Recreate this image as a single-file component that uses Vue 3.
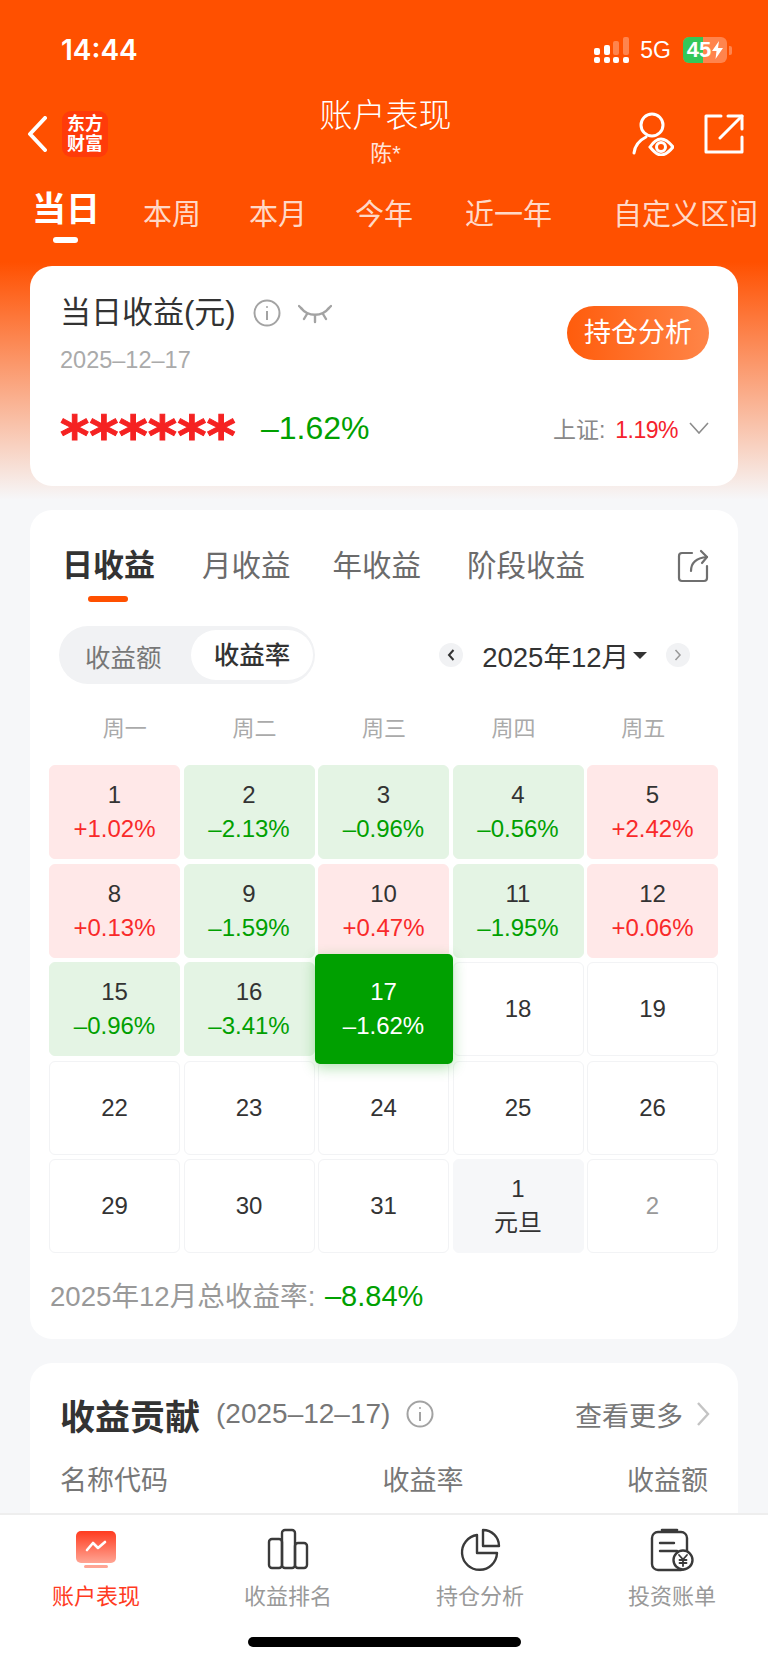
<template>
  <div class="page">
    <div class="status">
      <span class="time">14:44</span>
      <div class="status-right">
        <svg class="signal" width="36" height="28" viewBox="0 0 36 28">
          <rect x="0" y="12" width="6" height="7" rx="2" fill="#fff" />
          <rect x="10" y="9" width="6" height="10" rx="2" fill="#fff" />
          <rect x="19" y="5" width="6" height="14" rx="2" fill="#fff" opacity="0.3" />
          <rect x="29" y="1" width="6" height="18" rx="2" fill="#fff" opacity="0.3" />
          <rect x="0" y="21" width="6" height="6" rx="2" fill="#fff" />
          <rect x="10" y="21" width="6" height="6" rx="2" fill="#fff" />
          <rect x="19" y="21" width="6" height="6" rx="2" fill="#fff" />
          <rect x="29" y="21" width="6" height="6" rx="2" fill="#fff" />
        </svg>
        <span class="net">5G</span>
        <div class="battery">
          <span class="level"></span>
          <span class="num">45</span>
          <svg width="11" height="18" viewBox="0 0 11 18" class="bolt">
            <path d="M7 0 L0 10 H4.5 L3.5 18 L11 7 H6 Z" fill="#fff" />
          </svg>
        </div>
        <span class="nub"></span>
      </div>
    </div>

    <div class="nav">
      <div class="nav-left">
        <svg width="20" height="36" viewBox="0 0 20 36">
          <path d="M18 2 L3 18 L18 34" fill="none" stroke="#fff" stroke-width="4" stroke-linecap="round" stroke-linejoin="round" />
        </svg>
        <div class="logo">东方<br />财富</div>
      </div>
      <div class="nav-title">
        <div class="title">账户表现</div>
        <div class="sub">陈*</div>
      </div>
      <div class="nav-right">
        <svg width="42" height="44" viewBox="0 0 42 44" fill="none" stroke="#fff" stroke-width="3" stroke-linecap="round">
          <circle cx="20" cy="13" r="11" />
          <path d="M2 41 C3 32 8 28 14 25" />
          <path d="M18 35 C22 29 26 27 29 27 C33 27 37 30 41 35 C37 40 33 43 29 43 C25 43 22 40 18 35 Z" />
          <circle cx="29" cy="35" r="4.5" />
        </svg>
        <svg width="40" height="40" viewBox="0 0 40 40" fill="none" stroke="#fff" stroke-width="3" stroke-linecap="round" stroke-linejoin="round">
          <path d="M17 2 H2 V38 H38 V23" />
          <path d="M16 24 L38 2" />
          <path d="M24 2 H38 V15" />
        </svg>
      </div>
    </div>

    <div class="ranges">
      <span v-for="(r, i) in ranges" :key="r" class="range" :class="{ on: i === 0 }">{{ r }}</span>
    </div>

    <section class="card summary">
      <div class="sum-top">
        <div>
          <div class="sum-title">
            <span>当日收益(元)</span>
            <svg class="info" width="28" height="28" viewBox="0 0 28 28" fill="none" stroke="#a3a3a3" stroke-width="2">
              <circle cx="14" cy="14" r="12.5" />
              <path d="M14 12 V21" />
              <circle cx="14" cy="8" r="1" fill="#a3a3a3" stroke="none" />
            </svg>
            <svg class="eye" width="34" height="20" viewBox="0 0 34 20" fill="none" stroke="#a3a3a3" stroke-width="2.4" stroke-linecap="round">
              <path d="M3 4 C10 13 24 13 31 4" />
              <path d="M1 2 L4 5 M33 2 L30 5 M9 10 L6 15 M25 10 L28 15 M17 12 V18" />
            </svg>
          </div>
          <div class="sum-date">2025–12–17</div>
        </div>
        <div class="pill">持仓分析</div>
      </div>
      <div class="sum-bottom">
        <span class="stars">******</span>
        <span class="sum-rate">–1.62%</span>
        <span class="index">上证:<em>1.19%</em></span>
        <svg width="20" height="12" viewBox="0 0 20 12" fill="none" stroke="#8c8c8c" stroke-width="1.6">
          <path d="M1 1 L10 11 L19 1" />
        </svg>
      </div>
    </section>

    <section class="card calendar">
      <div class="cal-tabs">
        <span v-for="(t, i) in calTabs" :key="t" class="cal-tab" :class="{ on: i === 0 }">{{ t }}</span>
        <svg class="share" width="32" height="34" viewBox="0 0 32 34" fill="none" stroke="#6f6f6f" stroke-width="2.2" stroke-linecap="round" stroke-linejoin="round">
          <path d="M15 4 H5 Q2 4 2 7 V29 Q2 32 5 32 H27 Q30 32 30 29 V17" />
          <path d="M14 22 C14 14 19 9 30 8" />
          <path d="M24 2 L30 8 L25 14" />
        </svg>
      </div>

      <div class="cal-tools">
        <div class="segment">
          <span class="seg">收益额</span>
          <span class="seg active">收益率</span>
        </div>
        <div class="month">
          <span class="arrow">
            <svg width="8" height="12" viewBox="0 0 8 12" fill="none" stroke="#333" stroke-width="2"><path d="M6.5 1 L2 6 L6.5 11" /></svg>
          </span>
          <span class="month-text">2025年12月</span>
          <span class="caret"></span>
          <span class="arrow next">
            <svg width="8" height="12" viewBox="0 0 8 12" fill="none" stroke="#999" stroke-width="1.5"><path d="M1.5 1 L6 6 L1.5 11" /></svg>
          </span>
        </div>
      </div>

      <div class="week">
        <span v-for="w in weekdays" :key="w">{{ w }}</span>
      </div>

      <div class="grid">
        <div v-for="c in cells" :key="c.key" class="cell" :class="c.type">
          <span class="day">{{ c.day }}</span>
          <span v-if="c.rate" class="rate">{{ c.rate }}</span>
          <span v-if="c.note" class="note">{{ c.note }}</span>
        </div>
      </div>

      <div class="total">2025年12月总收益率: <b>–8.84%</b></div>
    </section>

    <section class="card contrib">
      <div class="con-head">
        <span class="con-title">收益贡献</span>
        <span class="con-date">(2025–12–17)</span>
        <svg width="28" height="28" viewBox="0 0 28 28" fill="none" stroke="#a3a3a3" stroke-width="2">
          <circle cx="14" cy="14" r="12.5" />
          <path d="M14 12 V21" />
          <circle cx="14" cy="8" r="1" fill="#a3a3a3" stroke="none" />
        </svg>
        <span class="more">查看更多</span>
        <svg class="more-arrow" width="14" height="26" viewBox="0 0 14 26" fill="none" stroke="#c4c4c4" stroke-width="2.4">
          <path d="M2 2 L12 13 L2 24" />
        </svg>
      </div>
      <div class="con-cols">
        <span>名称代码</span>
        <span>收益率</span>
        <span>收益额</span>
      </div>
    </section>

    <nav class="tabbar">
      <div class="tab on">
        <svg width="44" height="44" viewBox="0 0 44 44">
          <defs>
            <linearGradient id="act" x1="0" y1="0" x2="0" y2="1">
              <stop offset="0" stop-color="#ff3b1f" />
              <stop offset="1" stop-color="#ffa594" />
            </linearGradient>
          </defs>
          <rect x="2" y="3" width="40" height="32" rx="5" fill="url(#act)" />
          <rect x="10" y="37" width="24" height="3" rx="1.5" fill="#ffa594" />
          <path d="M13 22 L19 15 L24 20 L31 14" fill="none" stroke="#fff" stroke-width="2.6" stroke-linecap="round" stroke-linejoin="round" />
        </svg>
        <span>账户表现</span>
      </div>
      <div class="tab">
        <svg width="44" height="44" viewBox="0 0 44 44" fill="none" stroke="#3a3a3a" stroke-width="2.4" stroke-linejoin="round">
          <rect x="3" y="11" width="13" height="29" rx="3" />
          <rect x="16" y="2" width="13" height="38" rx="3" />
          <rect x="29" y="15" width="12" height="25" rx="3" />
        </svg>
        <span>收益排名</span>
      </div>
      <div class="tab">
        <svg width="44" height="44" viewBox="0 0 44 44" fill="none" stroke="#3a3a3a" stroke-width="2.4" stroke-linejoin="round">
          <path d="M19 7 A17.5 17.5 0 1 0 39 25 H19 Z" />
          <path d="M25 2 A16 16 0 0 1 41 18 H25 Z" />
        </svg>
        <span>持仓分析</span>
      </div>
      <div class="tab">
        <svg width="44" height="44" viewBox="0 0 44 44" fill="none" stroke="#3a3a3a" stroke-width="2.4" stroke-linecap="round">
          <rect x="2" y="4" width="35" height="38" rx="6" />
          <path d="M12 2 H27" stroke-width="2.6" />
          <path d="M10 15 H24 M10 23 H27" />
          <circle cx="33" cy="32" r="9.5" fill="#fff" />
          <path d="M29 27 L33 31.5 L37 27 M33 31.5 V38 M29.5 32 H36.5 M29.5 35 H36.5" stroke-width="1.8" />
        </svg>
        <span>投资账单</span>
      </div>
      <div class="home"></div>
    </nav>
  </div>
</template>

<script setup>
const ranges = ["当日", "本周", "本月", "今年", "近一年", "自定义区间"];
const calTabs = ["日收益", "月收益", "年收益", "阶段收益"];
const weekdays = ["周一", "周二", "周三", "周四", "周五"];

const up = (day, rate) => ({ key: "d" + day, day, rate, type: "up" });
const down = (day, rate) => ({ key: "d" + day, day, rate, type: "down" });
const plain = (day) => ({ key: "d" + day, day, type: "plain" });

const cells = [
  up(1, "+1.02%"),
  down(2, "–2.13%"),
  down(3, "–0.96%"),
  down(4, "–0.56%"),
  up(5, "+2.42%"),
  up(8, "+0.13%"),
  down(9, "–1.59%"),
  up(10, "+0.47%"),
  down(11, "–1.95%"),
  up(12, "+0.06%"),
  down(15, "–0.96%"),
  down(16, "–3.41%"),
  { key: "d17", day: 17, rate: "–1.62%", type: "today" },
  plain(18),
  plain(19),
  plain(22),
  plain(23),
  plain(24),
  plain(25),
  plain(26),
  plain(29),
  plain(30),
  plain(31),
  { key: "n1", day: 1, note: "元旦", type: "holiday" },
  { key: "n2", day: 2, type: "plain muted" },
];
</script>

<style>
html,
body {
  margin: 0;
  background: #f6f7f9;
}
</style>

<style scoped>
.page {
  position: relative;
  width: 768px;
  height: 1663px;
  overflow: hidden;
  font-family: "Liberation Sans", "Noto Sans CJK SC", sans-serif;
  color: #333;
  background: linear-gradient(#ff5000 0, #ff5000 262px, #f6f7f9 500px);
}

.status {
  height: 96px;
  display: flex;
  justify-content: space-between;
  align-items: flex-start;
  padding: 0 36px 0 61px;
  box-sizing: border-box;
  color: #fff;
}

.time {
  margin-top: 32px;
  font-family: "Inter", sans-serif;
  font-size: 28px;
  line-height: 36px;
  font-weight: 600;
}

.status-right {
  display: flex;
  align-items: center;
  margin-top: 36px;
  height: 28px;
}

.signal {
  margin-right: 10px;
}

.net {
  font-size: 23px;
  margin-right: 12px;
}

.battery {
  position: relative;
  display: flex;
  align-items: center;
  justify-content: center;
  gap: 1px;
  width: 44px;
  height: 26px;
  border-radius: 6px;
  overflow: hidden;
  background: rgba(255, 255, 255, 0.3);
}

.level {
  position: absolute;
  left: 0;
  top: 0;
  bottom: 0;
  width: 20px;
  background: #34c759;
}

.num {
  position: relative;
  font-size: 22px;
  font-weight: 700;
}

.bolt {
  position: relative;
}

.nub {
  width: 3px;
  height: 9px;
  margin-left: 2px;
  border-radius: 0 2px 2px 0;
  background: rgba(255, 255, 255, 0.3);
}

.nav {
  height: 76px;
  display: flex;
  align-items: center;
  justify-content: space-between;
  padding: 0 24px 0 27px;
}

.nav-left {
  display: flex;
  align-items: center;
  gap: 15px;
  width: 200px;
}

.logo {
  width: 46px;
  height: 46px;
  box-sizing: border-box;
  padding-top: 3px;
  border-radius: 9px;
  background: #ff3b0a;
  color: #fff;
  font-size: 18px;
  line-height: 20px;
  font-weight: 700;
  text-align: center;
}

.nav-title {
  text-align: center;
  color: #fff;
}

.title {
  font-size: 33px;
  line-height: 40px;
  font-weight: 300;
  margin-top: -4px;
}

.sub {
  font-size: 22px;
  line-height: 30px;
  margin-top: 3px;
  opacity: 0.85;
}

.nav-right {
  display: flex;
  align-items: center;
  justify-content: flex-end;
  gap: 30px;
  width: 200px;
}

.ranges {
  height: 94px;
  box-sizing: border-box;
  padding: 14px 0 0 32px;
  display: flex;
  align-items: flex-start;
  white-space: nowrap;
}

.range {
  margin-left: 48px;
  padding-top: 11px;
  font-size: 29px;
  line-height: 36px;
  color: rgba(255, 255, 255, 0.8);
}

.range:nth-child(2) {
  margin-left: 43px;
}

.range:nth-child(5) {
  margin-left: 52px;
}

.range:nth-child(6) {
  margin-left: 61px;
}

.range.on {
  position: relative;
  margin-left: 0;
  padding-top: 0;
  font-size: 34px;
  line-height: 46px;
  font-weight: 700;
  color: #fff;
}

.range.on::after {
  content: "";
  position: absolute;
  left: 21px;
  top: 51px;
  width: 25px;
  height: 6px;
  border-radius: 3px;
  background: #fff;
}

.card {
  margin: 0 30px;
  background: #fff;
  border-radius: 22px;
}

.summary {
  height: 220px;
  box-sizing: border-box;
  padding: 26px 29px 0 30px;
}

.sum-top {
  display: flex;
  justify-content: space-between;
  align-items: flex-start;
}

.sum-title {
  display: flex;
  align-items: center;
  font-size: 31px;
  line-height: 42px;
  color: #333;
}

.info {
  margin-left: 17px;
}

.eye {
  margin: 2px 0 0 17px;
}

.sum-date {
  margin-top: 11px;
  font-size: 23.5px;
  line-height: 30px;
  color: #aaa;
}

.pill {
  margin: 14px 0 0;
  width: 142px;
  height: 54px;
  border-radius: 27px;
  background: linear-gradient(90deg, #ff5c0c, #ff8548);
  color: #fff;
  font-size: 27px;
  line-height: 54px;
  text-align: center;
}

.sum-bottom {
  display: flex;
  align-items: center;
  margin-top: 30px;
  height: 46px;
}

.stars {
  width: 175px;
  height: 46px;
  font-family: "DejaVu Sans", sans-serif;
  font-size: 56px;
  font-weight: 700;
  line-height: 62px;
  color: #f52222;
  white-space: nowrap;
  -webkit-text-stroke: 1px #f52222;
}

.sum-rate {
  margin-left: 26px;
  font-size: 32px;
  color: #00a000;
}

.index {
  margin-left: auto;
  font-size: 23px;
  color: #888;
}

.index em {
  margin: 0 11px 0 10px;
  font-style: normal;
  letter-spacing: -0.5px;
  color: #f5222d;
}

.calendar {
  margin-top: 24px;
  height: 829px;
  box-sizing: border-box;
  padding: 0 20px;
}

.cal-tabs {
  display: flex;
  align-items: flex-start;
  height: 116px;
  padding: 36px 9px 0 12px;
  box-sizing: border-box;
}

.cal-tab {
  margin-left: 42px;
  font-size: 29.5px;
  line-height: 40px;
  color: #6b6b6b;
}

.cal-tab:nth-child(2) {
  margin-left: 47px;
}

.cal-tab:nth-child(4) {
  margin-left: 46px;
}

.cal-tab.on {
  position: relative;
  margin-left: 0;
  font-size: 31px;
  font-weight: 700;
  color: #333;
}

.cal-tab.on::after {
  content: "";
  position: absolute;
  left: 26px;
  top: 50px;
  width: 40px;
  height: 6px;
  border-radius: 3px;
  background: #ff5000;
}

.share {
  margin-left: auto;
  margin-top: 3px;
}

.cal-tools {
  display: flex;
  justify-content: space-between;
  align-items: center;
  padding: 0 28px 0 9px;
}

.segment {
  display: flex;
  align-items: center;
  justify-content: space-between;
  width: 256px;
  height: 58px;
  box-sizing: border-box;
  padding: 0 2px 0 26px;
  border-radius: 29px;
  background: #f1f2f4;
}

.seg {
  font-size: 25.5px;
  color: #777;
}

.seg.active {
  width: 122px;
  height: 50px;
  line-height: 50px;
  border-radius: 25px;
  background: #fff;
  text-align: center;
  font-weight: 500;
  color: #333;
}

.month {
  display: flex;
  align-items: center;
}

.arrow {
  display: flex;
  align-items: center;
  justify-content: center;
  width: 24px;
  height: 24px;
  border-radius: 50%;
  background: #f1f2f4;
}

.month-text {
  margin-left: 19px;
  font-size: 27.5px;
  color: #333;
}

.caret {
  margin: 0 19px 0 4px;
  border-left: 7px solid transparent;
  border-right: 7px solid transparent;
  border-top: 7px solid #333;
}

.week {
  display: grid;
  grid-template-columns: repeat(5, 1fr);
  margin: 23px 10px 0;
  height: 58px;
  font-size: 22px;
  line-height: 44px;
  color: #aaa;
  text-align: center;
}

.grid {
  display: grid;
  grid-template-columns: repeat(5, 131px);
  grid-auto-rows: 94px;
  gap: 4.5px 3.5px;
  margin-left: -1px;
}

.cell {
  position: relative;
  display: flex;
  flex-direction: column;
  align-items: center;
  justify-content: center;
  box-sizing: border-box;
  border: 1px solid #f2f3f5;
  border-radius: 6px;
  font-size: 24px;
  line-height: 34px;
  color: #333;
}

.cell .rate {
  font-size: 24px;
}

.cell.up {
  background: #ffe8e8;
  border-color: #ffe8e8;
}

.cell.up .rate {
  color: #f92a2a;
}

.cell.down {
  background: #e4f4e4;
  border-color: #e4f4e4;
}

.cell.down .rate {
  color: #00a000;
}

.cell.holiday {
  background: #f6f7f9;
  border-color: #f6f7f9;
}

.cell.muted {
  color: #999;
}

.cell.today {
  z-index: 2;
  border-color: transparent;
  color: #fff;
}

.cell.today::before {
  content: "";
  position: absolute;
  inset: -9px -5px -9px -4px;
  border-radius: 5px;
  background: #00a000;
  box-shadow: 0 4px 14px rgba(0, 160, 0, 0.3);
}

.cell.today span {
  position: relative;
}

.total {
  margin-top: 25px;
  font-size: 27.6px;
  line-height: 36px;
  color: #999;
  white-space: nowrap;
}

.total b {
  margin-left: 2px;
  font-size: 29px;
  font-weight: 400;
  color: #00a000;
}

.contrib {
  margin-top: 24px;
  height: 220px;
  box-sizing: border-box;
  padding: 28px 30px 0;
}

.con-head {
  display: flex;
  align-items: center;
  height: 46px;
}

.con-title {
  font-size: 35px;
  font-weight: 700;
  color: #333;
}

.con-date {
  margin: 0 16px;
  font-size: 28px;
  color: #777;
}

.more {
  margin: 0 13px 0 auto;
  font-size: 27px;
  color: #777;
}

.more-arrow {
  margin-right: -2px;
}

.con-cols {
  display: flex;
  justify-content: space-between;
  margin-top: 24px;
  font-size: 27px;
  line-height: 40px;
  color: #777;
}

.con-cols span:nth-child(2) {
  margin-left: 51px;
}

.tabbar {
  position: absolute;
  left: 0;
  right: 0;
  bottom: 0;
  height: 150px;
  display: grid;
  grid-template-columns: repeat(4, 1fr);
  box-sizing: border-box;
  border-top: 2px solid #eeeeee;
  background: #fff;
}

.tab {
  display: flex;
  flex-direction: column;
  align-items: center;
  padding-top: 13px;
  font-size: 22px;
  line-height: 30px;
  color: #999;
}

.tab span {
  margin-top: 10px;
}

.tab.on {
  color: #ff3b1f;
}

.home {
  position: absolute;
  left: 248px;
  bottom: 16px;
  width: 273px;
  height: 10px;
  border-radius: 5px;
  background: #000;
}
</style>
